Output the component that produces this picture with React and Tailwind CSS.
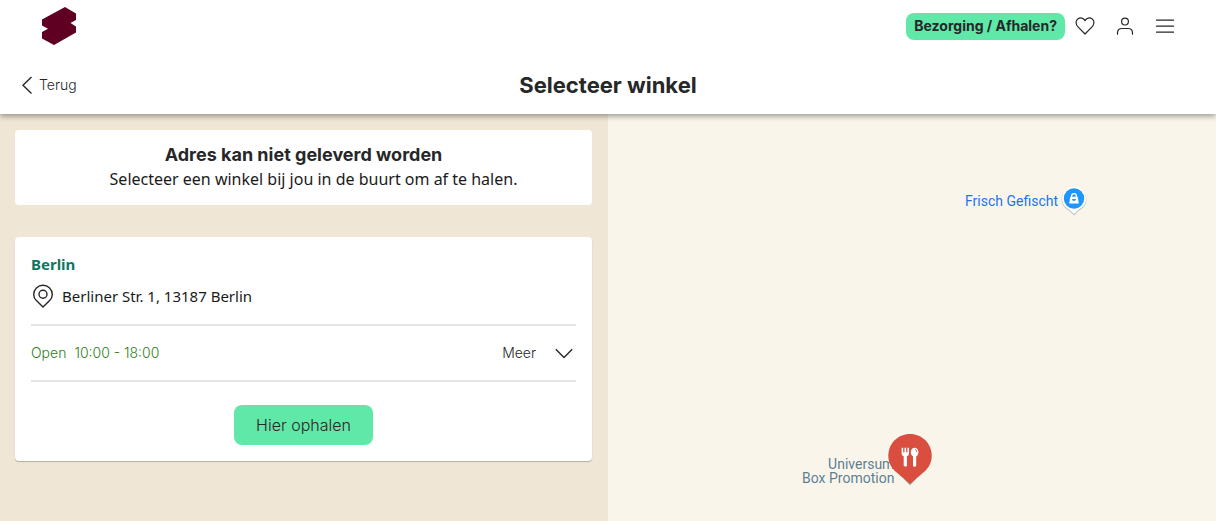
import { useState } from "react";

function Logo() {
  return (
    <svg width="34" height="38" viewBox="0 0 34 38" fill="#5f0023" aria-hidden="true">
      <path d="M23 0 L34 6.5 V13 L28.5 16 L34 19.5 V25.5 L12 38 L0 31.5 V25 L6 21.8 L0 18.5 V12.5 Z" />
    </svg>
  );
}

function IconButton({ label, children }) {
  return (
    <button aria-label={label} className="flex h-10 w-10 items-center justify-center">
      <svg
        width="24"
        height="24"
        viewBox="0 0 24 24"
        fill="none"
        stroke="#262728"
        strokeWidth="1.2"
        strokeLinecap="round"
        strokeLinejoin="round"
      >
        {children}
      </svg>
    </button>
  );
}

function Header() {
  return (
    <header className="relative z-10 bg-white shadow-[0_2px_6px_rgba(0,0,0,0.4)]">
      <div className="flex h-[52px] items-center justify-between pl-[42px] pr-[31px]">
        <a href="#" aria-label="Home">
          <Logo />
        </a>
        <div className="flex items-center">
          <button className="h-[27px] rounded-lg bg-[#5fe8a8] px-2 text-sm font-bold">
            Bezorging / Afhalen?
          </button>
          <IconButton label="Favorieten">
            <path d="M12 20 L5 12.8 C2.4 10.2 2.5 6.6 4.8 4.9 C7.2 3.2 10.6 3.9 12 6.6 C13.4 3.9 16.8 3.2 19.2 4.9 C21.5 6.6 21.6 10.2 19 12.8 Z" />
          </IconButton>
          <IconButton label="Account">
            <circle cx="12" cy="7.6" r="3.4" />
            <path d="M4.5 20.2 V19 C4.5 16.2 6.4 14.5 9 14.5 H15 C17.6 14.5 19.5 16.2 19.5 19 V20.2" />
          </IconButton>
          <IconButton label="Menu">
            <path d="M3.5 6.2 H20.5 M3.5 12.2 H20.5 M3.5 18.2 H20.5" />
          </IconButton>
        </div>
      </div>

      <div className="grid h-[62px] grid-cols-[1fr_auto_1fr] items-center px-5 pt-1">
        <button className="flex items-center gap-1 justify-self-start text-sm font-light">
          <svg width="15" height="20" viewBox="0 0 15 20" fill="none" stroke="#262728" strokeWidth="1.4">
            <path d="M11.5 2 L3 10.2 L11.5 18.4" />
          </svg>
          Terug
        </button>
        <h1 className="text-[22px] font-bold">Selecteer winkel</h1>
      </div>
    </header>
  );
}

function StoreCard() {
  const [open, setOpen] = useState(false);

  return (
    <section className="rounded bg-white px-4 pb-4 pt-[15px] shadow-[0_1px_1px_rgba(0,0,0,0.25)]">
      <h3 className="font-['Noto_Sans',sans-serif] text-[15px] font-bold leading-6 text-[#0f7663]">Berlin</h3>
      <div className="flex h-[50px] items-start gap-[7px] border-b-2 border-[#e5e5e5] pt-2">
        <svg width="24" height="24" viewBox="0 0 24 24" fill="none" stroke="#262728" strokeWidth="1.4">
          <path d="M12 23 L5.4 16.6 C3.7 14.9 2.7 12.8 2.7 10.4 C2.7 5.3 6.8 1.2 12 1.2 C17.2 1.2 21.3 5.3 21.3 10.4 C21.3 12.8 20.3 14.9 18.6 16.6 Z" />
          <circle cx="12" cy="10.2" r="4" />
        </svg>
        <address className="font-['Noto_Sans',sans-serif] text-[15px] not-italic leading-6 text-[#1a1a1a]">
          Berliner Str. 1, 13187 Berlin
        </address>
      </div>
      <div className="flex h-14 items-center justify-between border-b-2 border-[#e5e5e5] text-sm font-light">
        <p className="flex gap-2 text-[#2f7d1b]">
          <span>Open</span>
          <span>10:00 - 18:00</span>
        </p>
        <button
          className="flex items-center gap-4"
          aria-expanded={open}
          onClick={() => setOpen(!open)}
        >
          Meer
          <svg width="24" height="24" viewBox="0 0 24 24" fill="none" stroke="#262728" strokeWidth="1.4">
            <path d="M3.8 8.2 L12 16.6 L20.2 8.2" />
          </svg>
        </button>
      </div>
      <div className="flex justify-center pt-[23px]">
        <button className="h-10 rounded-lg bg-[#5fe8a8] px-[22px] text-base font-light">Hier ophalen</button>
      </div>
    </section>
  );
}

function ShopMarker() {
  return (
    <svg width="26" height="30" viewBox="0 0 26 30" aria-hidden="true">
      <path
        d="M13 29.4 L8 24.6 C3.6 22.6 0.6 18.4 0.6 13.6 C0.6 6.8 6 1.6 13 1.6 C20 1.6 25.4 6.8 25.4 13.6 C25.4 18.4 22.4 22.6 18 24.6 Z"
        fill="#c4c0b8"
      />
      <path
        d="M13 28 L8.2 23.4 C3.8 21.6 1 17.6 1 12.8 C1 6 6.2 0.8 13 0.8 C19.8 0.8 25 6 25 12.8 C25 17.6 22.2 21.6 17.8 23.4 Z"
        fill="#fff"
      />
      <circle cx="13" cy="12.5" r="10.2" fill="#1e96fc" />
      <path d="M9.3 10.8 H16.7 L17.8 17.4 H8.2 Z" fill="#fff" />
      <path d="M10.6 11.5 V10 C10.6 6.8 15.4 6.8 15.4 10 V11.5" fill="none" stroke="#fff" strokeWidth="1.3" />
      <path d="M11 13 C11.3 15.5 14.7 15.5 15 13 Z" fill="#1e96fc" />
    </svg>
  );
}

function RestaurantMarker() {
  return (
    <svg width="44" height="53" viewBox="0 0 44 53" aria-hidden="true">
      <path d="M16 46 L22 52.4 L28 46 Z" fill="#aeb0b2" />
      <path
        d="M22 51 L7.2 38.2 C2.9 34.4 0.3 28.9 0.3 22.8 C0.3 10.6 9.9 1 22 1 C34.1 1 43.7 10.6 43.7 22.8 C43.7 28.9 41.1 34.4 36.8 38.2 Z"
        fill="#da4e3f"
      />
      <g fill="#fff">
        <path d="M13.6 14.8 H15.2 V19.2 H16.5 V14.8 H18.1 V19.2 H19.4 V14.8 H21 V20.2 C21 22 20 23 18.9 23.3 V32.6 C18.9 34.2 15.7 34.2 15.7 32.6 V23.3 C14.6 23 13.6 22 13.6 20.2 Z" />
        <ellipse cx="26.6" cy="19.2" rx="3.8" ry="4.5" />
        <path d="M25 22 H28.2 V32.6 C28.2 34.2 25 34.2 25 32.6 Z" />
      </g>
      <path d="M27 16.2 Q28.8 17 28.7 19" fill="none" stroke="#da4e3f" strokeWidth="0.8" />
    </svg>
  );
}

function StoreMap() {
  return (
    <section
      aria-label="Kaart"
      className="relative w-1/2 overflow-hidden bg-[#f9f5ea] font-[Roboto,sans-serif] text-sm leading-[14px]"
    >
      <div className="absolute left-[357px] top-[72px] flex items-center gap-[3px] text-[#1a73e8] text-shadow-[0_0_2px_#fff]">
        <span>Frisch Gefischt</span>
        <ShopMarker />
      </div>
      <div className="absolute left-[194px] top-[343px] text-right text-[#5f7d8c] text-shadow-[0_0_2px_#fff]">
        <p>Universum</p>
        <p>Box Promotion</p>
      </div>
      <div className="absolute left-[280px] top-[319px]">
        <RestaurantMarker />
      </div>
    </section>
  );
}

export default function App() {
  return (
    <div className="flex min-h-screen flex-col font-[Inter,sans-serif] text-[#262728]">
      <Header />
      <main className="flex flex-1">
        <div className="flex w-1/2 flex-col gap-8 bg-[#f0e6d5] py-4 pl-[15px] pr-4">
          <section className="rounded bg-white px-4 pb-[14px] pt-[13px] text-center">
            <h2 className="text-lg font-bold leading-6">Adres kan niet geleverd worden</h2>
            <p className="pl-5 font-['Noto_Sans',sans-serif] text-base leading-6 text-[#1a1a1a]">
              Selecteer een winkel bij jou in de buurt om af te halen.
            </p>
          </section>
          <StoreCard />
        </div>
        <StoreMap />
      </main>
    </div>
  );
}
